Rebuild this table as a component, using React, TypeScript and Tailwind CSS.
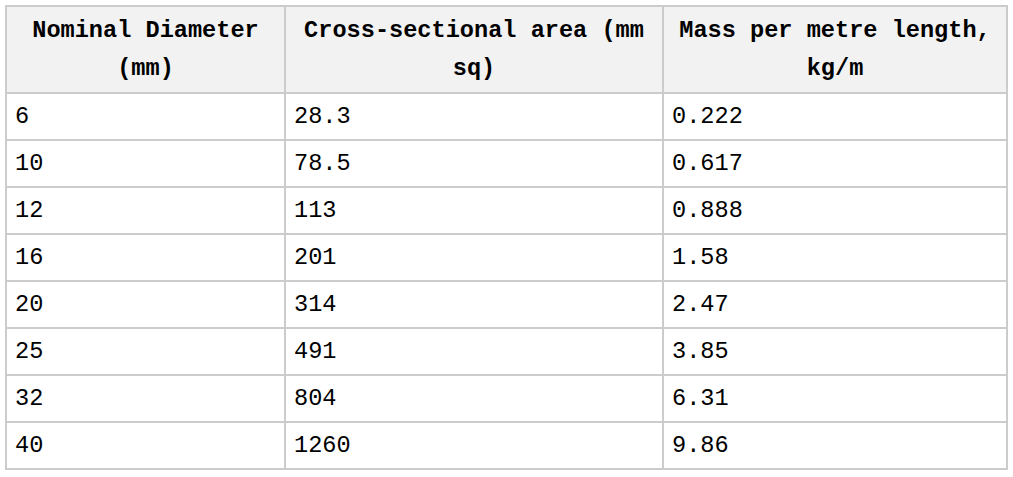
const rows: [string, string, string][] = [
  ["6", "28.3", "0.222"],
  ["10", "78.5", "0.617"],
  ["12", "113", "0.888"],
  ["16", "201", "1.58"],
  ["20", "314", "2.47"],
  ["25", "491", "3.85"],
  ["32", "804", "6.31"],
  ["40", "1260", "9.86"],
];

const headers = ["Nominal Diameter (mm)", "Cross-sectional area (mm sq)", "Mass per metre length, kg/m"];

export default function App() {
  return (
    <div className="min-h-[477px] bg-white p-[5px] font-['Liberation_Mono',monospace] text-[23.6px] text-black">
      <table className="w-[1001px] table-fixed border-collapse border-2 border-[#cccccc]">
        <colgroup>
          <col className="w-[279px]" />
          <col className="w-[378px]" />
          <col className="w-[344px]" />
        </colgroup>
        <thead>
          <tr className="h-[87px] bg-[#f2f2f2]">
            {headers.map((h) => (
              <th key={h} className="border-2 border-[#cccccc] px-[8px] text-center align-middle font-bold leading-[38px]">
                {h}
              </th>
            ))}
          </tr>
        </thead>
        <tbody>
          {rows.map((r) => (
            <tr key={r[0]} className="h-[47px]">
              {r.map((c, i) => (
                <td key={i} className="border-2 border-[#cccccc] px-[8px] align-middle leading-[30px]">
                  {c}
                </td>
              ))}
            </tr>
          ))}
        </tbody>
      </table>
    </div>
  );
}
